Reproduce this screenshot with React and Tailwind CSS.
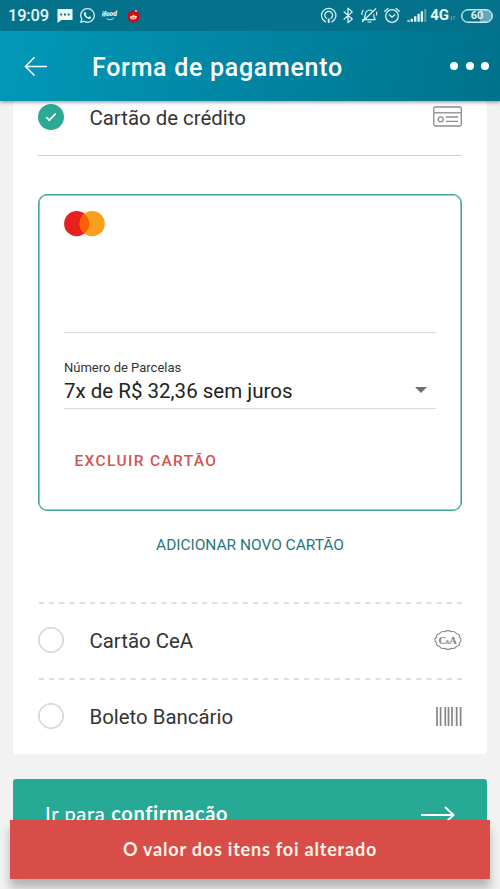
import { FaWhatsapp } from "react-icons/fa";

const otherMethods = [
  { id: "cea", label: "Cartão CeA", Icon: CeaIcon },
  { id: "boleto", label: "Boleto Bancário", Icon: BarcodeIcon },
];

function StatusIcons() {
  return (
    <svg className="h-[31px] w-[108px] shrink-0" fill="none" stroke="#e4f6fa" strokeWidth="1.2" strokeLinecap="round" strokeLinejoin="round" viewBox="320 0 108 31">
      {/* cast */}
      <path d="M326.4 21.9a7.200 7.200 0 1 1 6.600 0M327.400 18.400a3.900 3.900 0 1 1 4.600 0" />
      <path d="M329.700 19.500v2.600" strokeWidth="2" />
      {/* bluetooth */}
      <path d="M345 11.800l8.300 7.200-4.300 3.600V8.200l4.300 3.700-8.300 7.300" />
      {/* muted bell */}
      <path d="M363.500 19.600h12.800c-1.600-1.300-1.500-3-1.500-5.100M365.300 18c1.300-1.600.5-4 1.800-6 1.200-1.900 3.800-2.400 5.700-1.200M369 22h3M376.800 8.800L363.500 21.500M364 10.500c-1 1.200-1.300 2.500-1.100 4M377.600 12v3" />
      {/* alarm */}
      <circle cx="393" cy="16" r="6.300" />
      <path d="M390.300 14.800l2.700 2.400 2.900-2.400M385.700 11.300l3.400-2.900M400.300 11.300l-3.400-2.900" />
      {/* signal */}
      <path d="M409.500 21.800v-1.500M412.800 21.800v-3M416.200 21.800v-5.500M419.600 21.800v-8M422.900 21.800v-10.600" strokeLinecap="butt" strokeWidth="2.300" />
      <path d="M426.300 21.800V9" opacity=".4" strokeLinecap="butt" strokeWidth="2" />
    </svg>
  );
}

function StatusBar() {
  return (
    <div className="flex h-[31px] items-center bg-[#04728b] pl-[8px] text-[#e4f6fa]">
      <span className="w-[48.500px] text-[16.500px] font-medium leading-[31px] tracking-[-0.200px]">19:09</span>
      <svg className="h-[15px] w-[16px]" viewBox="0 0 16 15">
        <path d="M.5 1h15v11h-11l-4 3z" fill="#effafc" />
        <path d="M3.300 6.500h1.900M7 6.500h1.900M10.700 6.500h1.900" stroke="#04728b" strokeWidth="2" />
      </svg>
      <FaWhatsapp className="ml-[6.500px] h-[17px] w-[17px]" />
      <span className="relative ml-[6px] w-[18px] -rotate-3 pb-[3px] text-[7px] font-black italic leading-[8px] tracking-[-0.200px]">
        ifood
        <svg className="absolute bottom-0 left-[4px] h-[4px] w-[9px]" fill="none" viewBox="0 0 11 4">
          <path d="M1 1.500c3 2 6 1.800 8.500-.5" stroke="currentColor" strokeLinecap="round" />
        </svg>
      </span>
      <svg className="ml-[6px] h-[14px] w-[14px]" viewBox="0 0 14 14">
        <circle cx="7.500" cy="7.500" fill="#d4090d" r="6" />
        <path d="M7.200 5.200l1.600 1.600 1.900.2c.4 2.300-1 3.600-3.300 3.600S3.700 9.500 4 7.200l2 .1z" fill="#ffe6e4" />
        <path d="M5.600 9h3.600" stroke="#d4090d" strokeWidth=".8" />
        <circle cx="10" cy="2" fill="#f3dede" r=".9" />
      </svg>
      <div className="ml-auto flex items-center pr-[7px]">
        <StatusIcons />
        <span className="ml-[3px] text-[15px] font-bold leading-[31px]">4G</span>
        <svg className="ml-[1px] mt-[5px] h-[6px] w-[6px]" fill="none" stroke="currentColor" viewBox="0 0 6 6">
          <path d="M1.500 1v4l-1-1M4 5V1l1 1" opacity=".45" strokeWidth=".8" />
        </svg>
        <span className="ml-[5px] flex h-[14px] w-[32px] items-center justify-center rounded-full border border-[#c9edf4] bg-linear-to-r from-[#04728b] from-60% to-[#61a9ba] to-60% text-[11px] font-bold leading-none shadow-[inset_0_0_0_0.500px_#c9edf4]">60</span>
      </div>
    </div>
  );
}

function CardIcon() {
  return (
    <svg className="h-[21px] w-[29px]" fill="none" stroke="#8c8c8c" strokeWidth="1.300" viewBox="0 0 29 21">
      <rect height="19" rx="1.500" width="27.500" x=".8" y="1" />
      <path d="M1 6.800h27" />
      <circle cx="7.700" cy="13.300" r="2.500" />
      <path d="M13 11h12M13 15.300h12" />
    </svg>
  );
}

function CeaIcon() {
  return (
    <svg className="h-[20px] w-[28px]" viewBox="0 0 28 20">
      <path d="M10.500 1.700Q14-.5 17.500 1.700Q21 .8 22.700 3.800Q26 4.300 25.500 7.200Q28.500 10 25.500 12.800Q26 15.700 22.700 16.200Q21 19.200 17.500 18.300Q14 20.500 10.500 18.300Q7 19.200 5.300 16.200Q2 15.700 2.500 12.800Q-.5 10 2.500 7.200Q2 4.300 5.300 3.800Q7 .8 10.500 1.700z" fill="none" stroke="#858585" strokeWidth="1.100" />
      <text fill="#7c7c7c" fontFamily="Liberation Serif, serif" fontSize="10.500" fontWeight="700" letterSpacing="-.7" textAnchor="middle" x="13.400" y="13.600">
        C<tspan fontSize="5.500">&amp;</tspan>A
      </text>
    </svg>
  );
}

function BarcodeIcon() {
  return (
    <svg className="h-[19px] w-[26px]" stroke="#858585" viewBox="0 0 26 19">
      <path d="M1 0v19M4.600 0v19M9.300 0v19M12.500 0v19M16 0v19M20.700 0v19M24.600 0v19" strokeWidth="1.700" />
      <path d="M18.700 0v19" opacity=".25" strokeWidth=".7" />
    </svg>
  );
}

function DashedLine() {
  return (
    <svg className="block h-[2px] w-full" stroke="#d3d3d3">
      <line strokeDasharray="5.200 5" strokeWidth="1.600" x1="0.800" x2="424" y1="1" y2="1" />
    </svg>
  );
}

export default function App() {
  return (
    <div className="relative flex h-[889px] w-[500px] flex-col overflow-hidden bg-[#f2f2f2] font-[Roboto,sans-serif] text-[#343434]">
      <header className="relative z-10 shrink-0 shadow-[0_1px_4px_rgba(0,0,0,0.45)]">
        <StatusBar />
        <div className="flex h-[70px] items-center bg-linear-[100deg] from-[#0298b9] to-[#00728b] pl-[24px] pr-[11px] text-white">
          <svg className="h-[22px] w-[24px]" fill="none" stroke="currentColor" strokeWidth="1.500" viewBox="0 0 24 22">
            <path d="M23 11.500H1.500M10.500 2.300L1.500 11.500l9 9" />
          </svg>
          <h1 className="ml-[44px] mt-[4px] text-[25px] font-medium leading-[32px] tracking-[0.700px]">Forma de pagamento</h1>
          <div className="ml-auto flex gap-[7.500px]">
            <span className="h-2 w-2 rounded-full bg-white" />
            <span className="h-2 w-2 rounded-full bg-white" />
            <span className="h-2 w-2 rounded-full bg-white" />
          </div>
        </div>
      </header>

      <main className="mx-[13px] h-[653px] shrink-0 rounded-b-sm bg-white px-[25px]">
        <div className="flex h-[55px] items-start border-b border-[#cfcfcf] pt-[3px]">
          <span className="grid h-[26px] w-[26px] place-items-center rounded-full bg-[#2ba995]">
            <svg className="h-[10px] w-[12px]" fill="none" stroke="white" strokeWidth="1.700" viewBox="0 0 12 10">
              <path d="M1.200 5.200l3 3 6.500-6.500" />
            </svg>
          </span>
          <span className="ml-[25.500px] mt-px text-[20.400px] leading-[26px]">Cartão de crédito</span>
          <span className="ml-auto mt-[2px]"><CardIcon /></span>
        </div>

        <section className="mt-[38px] h-[317px] rounded-[9px] border border-[#3fa391] px-[25px] pt-[16px] shadow-[inset_0_0_0_0.600px_#3fa391]">
          <svg className="block h-[26px] w-[42px]" viewBox="0 0 42 26">
            <circle cx="12.700" cy="12.700" fill="#e8201e" r="12.600" />
            <circle cx="28.200" cy="12.700" fill="#f8a01b" r="12.600" />
            <path d="M20.450 2.800a12.600 12.600 0 0 1 0 19.800a12.600 12.600 0 0 1 0-19.800z" fill="#fc6006" />
          </svg>
          <div className="mt-[95px] border-b border-[#d8d8d8]" />
          <label className="mt-[26px] block text-[13px] leading-[17px]">Número de Parcelas</label>
          <div className="mt-px flex h-[32px] items-start justify-between border-b border-[#d8d8d8] pr-[9px] text-[#222]">
            <span className="text-[20.500px] leading-[28px]">7x de R$ 32,36 sem juros</span>
            <span className="mt-[10px] border-x-[6px] border-t-[6px] border-x-transparent border-t-[#707070]" />
          </div>
          <button className="ml-[10.500px] mt-[41px] block text-[15.500px] font-medium leading-[22px] tracking-[1.350px] text-[#d35450]" type="button">EXCLUIR CARTÃO</button>
        </section>

        <button className="mx-auto mt-[23px] block text-[15.500px] leading-[22px] tracking-[-0.030px] text-[#29767f]" type="button">ADICIONAR NOVO CARTÃO</button>

        <div className="mt-[45.500px]">
          {otherMethods.map(({ id, label, Icon }) => (
            <div key={id}>
              <DashedLine />
              <div className="flex h-[74.500px] items-center pb-[2px]">
                <span className="h-[26px] w-[26px] rounded-full border border-[#cfcfcf] shadow-[inset_0_0_0_0.600px_#cfcfcf]" />
                <span className="ml-[25.500px] mt-[2px] text-[20.400px] leading-[26px]">{label}</span>
                <span className="ml-auto"><Icon /></span>
              </div>
            </div>
          ))}
        </div>
      </main>

      <button className="mx-[13px] mt-[25px] flex h-[71px] shrink-0 items-center justify-between rounded-[3px] bg-[#26a995] px-[32px] font-[Lato,sans-serif] text-[20px] font-medium leading-[24px] tracking-[0.650px] text-white" type="button">
        <span className="pb-[3px]">Ir para <b>confirmação</b></span>
        <svg className="h-[18px] w-[34px]" fill="none" stroke="currentColor" strokeWidth="2" viewBox="0 0 34 18">
          <path d="M0 9h32M24 1l8.500 8-8.500 8" />
        </svg>
      </button>

      <div className="absolute left-[10px] top-[820px] flex h-[59px] w-[480px] items-center justify-center bg-[#d84d48] font-[Lato,sans-serif] text-[18px] font-bold tracking-[0.800px] text-[#fff3ea] shadow-[0_9px_9px_rgba(0,0,0,0.250)]" role="alert">
        O valor dos itens foi alterado
      </div>
    </div>
  );
}
